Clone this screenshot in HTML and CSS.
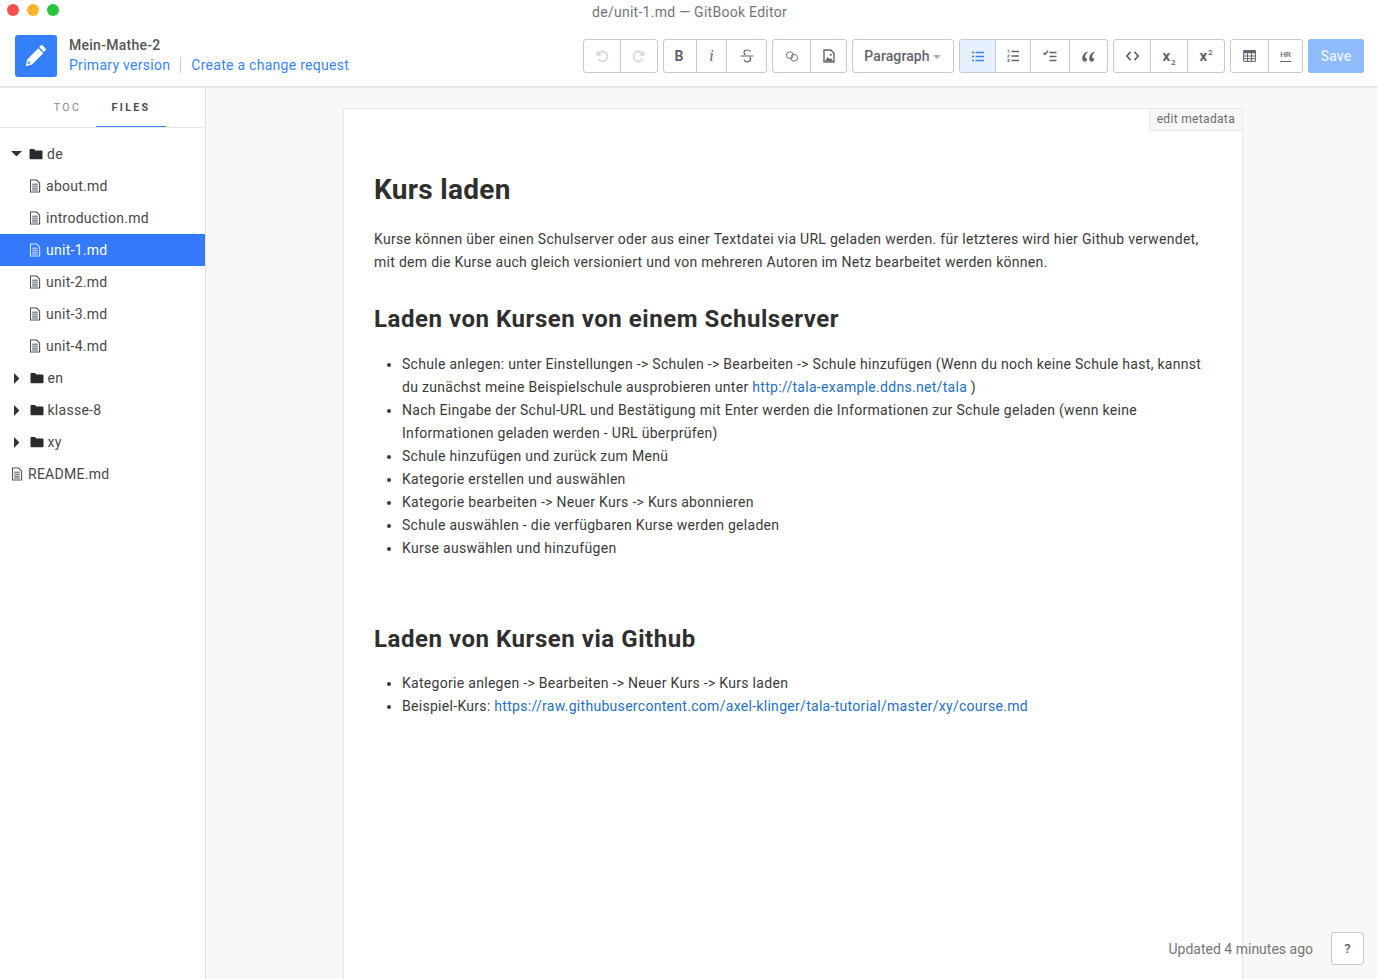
FILE: index.html
```html
<!DOCTYPE html>
<html lang="de">
<head>
<meta charset="utf-8">
<title>de/unit-1.md — GitBook Editor</title>
<link rel="stylesheet" href="styles.css">
</head>
<body>
<svg class="defs" width="0" height="0" aria-hidden="true">
  <symbol id="file" viewBox="0 0 12 14"><path d="M1.500 1h6.200L10.600 3.900V13H1.500z" fill="none" stroke="currentColor" stroke-width="1.100"/><path d="M3.200 5.200h5.600M3.200 7.200h5.600M3.200 9.200h5.600M3.200 11h5.600" stroke="currentColor" stroke-width="1"/></symbol>
  <symbol id="folder" viewBox="0 0 14 12"><path d="M0.500 2.200C0.500 1.500 1 1 1.700 1H5l1.200 1.400h6.200c.6 0 1.100.5 1.100 1.100v6.700c0 .6-.5 1.100-1.100 1.100H1.700c-.7 0-1.200-.5-1.200-1.100z" fill="currentColor"/></symbol>
</svg>
<div class="app">
  <header class="header">
    <div class="titlebar">
      <div class="lights"><i class="light red"></i><i class="light yellow"></i><i class="light green"></i></div>
      <div class="wintitle">de/unit-1.md — GitBook Editor</div>
    </div>
    <div class="headbar">
      <div class="logo">
        <svg width="24" height="24" viewBox="0 0 24 24"><path d="M15.100 3.100l1.900-1.700c.5-.4 1.100-.4 1.600 0l3 3c.5.5.5 1.200 0 1.700l-1.800 1.800z" fill="#fff"/><path d="M14.300 4.200l5 5L8 20.600l-6.300 1.700 1.500-6.900zM4.300 17l-.7 3 3-.8z" fill="#fff" fill-rule="evenodd"/></svg>
      </div>
      <div class="book">
        <div class="bookname">Mein-Mathe-2</div>
        <div class="booklinks"><a class="primary">Primary version</a><a class="change">Create a change request</a></div>
      </div>
      <div class="toolbar">
        <div class="group">
          <button class="tb w37 off"><svg width="14" height="14" viewBox="0 0 14 14"><path d="M2.500 2v3.800h3.800M2.800 5.600A5 5 0 1 1 3.200 10" fill="none" stroke="currentColor" stroke-width="2"/></svg></button>
          <button class="tb w36 off"><svg width="14" height="14" viewBox="0 0 14 14"><path d="M11.500 2v3.800H7.700M11.200 5.600A5 5 0 1 0 10.800 10" fill="none" stroke="currentColor" stroke-width="2"/></svg></button>
        </div>
        <div class="group">
          <button class="tb w33 glyph b">B</button>
          <button class="tb w30 glyph i">i</button>
          <button class="tb w39"><svg width="16" height="16" viewBox="0 0 16 16"><path d="M11.500 3.400C11 2.500 10 2 8.300 2 6 2 5 3.200 5 4.500c0 1 .5 1.900 1.500 2.500M5 11.600c.5 1.300 1.700 2.200 3.400 2.200 2 0 3.300-1 3.300-2.700 0-1-.4-1.800-1.200-2.400" fill="none" stroke="currentColor" stroke-width="1.200"/><path d="M1.500 8h13" stroke="currentColor" stroke-width="1.100"/></svg></button>
        </div>
        <div class="group">
          <button class="tb w38"><svg width="14" height="11" viewBox="0 0 14 11"><circle cx="4.800" cy="4.200" r="3.400" fill="none" stroke="currentColor" stroke-width=".9"/><circle cx="9.200" cy="6.800" r="3.400" fill="none" stroke="currentColor" stroke-width=".9"/></svg></button>
          <button class="tb w35"><svg width="12" height="14" viewBox="0 0 12 14"><path d="M1 1h6.800L11 4.200V13H1z" fill="none" stroke="currentColor" stroke-width="1.400"/><path d="M2 12l2.800-4 1.800 2.300 1.100-1.200L10 12z" fill="currentColor"/><circle cx="7.800" cy="5.800" r="1.100" fill="currentColor"/></svg></button>
        </div>
        <div class="group">
          <button class="tb para">Paragraph<i class="caret"></i></button>
        </div>
        <div class="group">
          <button class="tb w36 on"><svg width="12" height="11" viewBox="0 0 12 11"><path d="M3.500 1.500H12M3.500 5.500H12M3.500 9.500H12" stroke="currentColor" stroke-width="1.500"/><path d="M0 1.500h2M0 5.500h2M0 9.500h2" stroke="currentColor" stroke-width="1.500"/></svg></button>
          <button class="tb w35"><svg width="12" height="12" viewBox="0 0 12 12"><path d="M4.500 1.500H12M4.500 6H12M4.500 10.500H12" stroke="currentColor" stroke-width="1.500"/><path d="M0.500.5h1.500v2.200M0.500 5h2L.5 7h2M.5 9.500h2l-.8 1 .8 1H.5" fill="none" stroke="currentColor" stroke-width=".8"/></svg></button>
          <button class="tb w39"><svg width="14" height="12" viewBox="0 0 14 12"><path d="M0.300 2.800l1.700 1.700L5 .8" fill="none" stroke="currentColor" stroke-width="1.500"/><path d="M6.500 2.500h7M6.500 6.500h7M6.500 10.500h7" stroke="currentColor" stroke-width="1.500"/></svg></button>
          <button class="tb w37"><svg width="13" height="11" viewBox="0 0 13 11"><path d="M5.600.4C2.400 1.600.2 3.900.2 7.200c0 2.300 1.100 3.500 2.600 3.500 1.300 0 2.200-.9 2.200-2.100S4.200 6.500 3 6.400c.1-2 1-3.700 2.900-5.100zM12.600.4C9.400 1.600 7.200 3.900 7.200 7.200c0 2.300 1.100 3.500 2.600 3.500 1.300 0 2.200-.9 2.200-2.100s-.8-2.100-2-2.200c.1-2 1-3.700 2.900-5.100z" fill="currentColor"/></svg></button>
        </div>
        <div class="group">
          <button class="tb w37"><svg width="13" height="10" viewBox="0 0 13 10"><path d="M4.500.8L1 5l3.500 4.200M8.500.8L12 5 8.500 9.200" fill="none" stroke="currentColor" stroke-width="1.700"/></svg></button>
          <button class="tb w37 glyph script"><span>x<sub>2</sub></span></button>
          <button class="tb w36 glyph script"><span>x<sup>2</sup></span></button>
        </div>
        <div class="group">
          <button class="tb w38"><svg width="13" height="12" viewBox="0 0 13 12"><path d="M.6.600h11.800v10.800H.6zM.6 6h11.800M.6 8.700h11.800M4.500 3.300v7.800M8.500 3.300v7.800" fill="none" stroke="currentColor" stroke-width="1"/><path d="M.6.600h11.800v2.700H.6z" fill="currentColor"/></svg></button>
          <button class="tb w33 hr"><span class="hrtext">HR</span></button>
        </div>
        <button class="save">Save</button>
      </div>
    </div>
  </header>
  <div class="main">
    <aside class="sidebar">
      <nav class="tabs"><span class="tab">TOC</span><span class="tab active">FILES</span></nav>
      <ul class="tree">
        <li class="row folder"><i class="arrow down"></i><svg class="ficon"><use href="#folder"/></svg>de</li>
        <li class="row file nested"><svg class="dicon"><use href="#file"/></svg>about.md</li>
        <li class="row file nested"><svg class="dicon"><use href="#file"/></svg>introduction.md</li>
        <li class="row file nested selected"><svg class="dicon"><use href="#file"/></svg>unit-1.md</li>
        <li class="row file nested"><svg class="dicon"><use href="#file"/></svg>unit-2.md</li>
        <li class="row file nested"><svg class="dicon"><use href="#file"/></svg>unit-3.md</li>
        <li class="row file nested"><svg class="dicon"><use href="#file"/></svg>unit-4.md</li>
        <li class="row folder"><i class="arrow right"></i><svg class="ficon"><use href="#folder"/></svg>en</li>
        <li class="row folder"><i class="arrow right"></i><svg class="ficon"><use href="#folder"/></svg>klasse-8</li>
        <li class="row folder"><i class="arrow right"></i><svg class="ficon"><use href="#folder"/></svg>xy</li>
        <li class="row file"><svg class="dicon"><use href="#file"/></svg>README.md</li>
      </ul>
    </aside>
    <main class="stage">
      <article class="page">
        <a class="metadata">edit metadata</a>
        <h1>Kurs laden</h1>
        <p>Kurse können über einen Schulserver oder aus einer Textdatei via URL geladen werden. für letzteres wird hier Github verwendet, mit dem die Kurse auch gleich versioniert und von mehreren Autoren im Netz bearbeitet werden können.</p>
        <h2>Laden von Kursen von einem Schulserver</h2>
        <ul class="list">
          <li>Schule anlegen: unter Einstellungen -&gt; Schulen -&gt; Bearbeiten -&gt; Schule hinzufügen (Wenn du noch keine Schule hast, kannst du zunächst meine Beispielschule ausprobieren unter <a>http://tala-example.ddns.net/tala</a> )</li>
          <li>Nach Eingabe der Schul-URL und Bestätigung mit Enter werden die Informationen zur Schule geladen (wenn keine Informationen geladen werden - URL überprüfen)</li>
          <li>Schule hinzufügen und zurück zum Menü</li>
          <li>Kategorie erstellen und auswählen</li>
          <li>Kategorie bearbeiten -&gt; Neuer Kurs -&gt; Kurs abonnieren</li>
          <li>Schule auswählen - die verfügbaren Kurse werden geladen</li>
          <li>Kurse auswählen und hinzufügen</li>
        </ul>
        <h2 class="second">Laden von Kursen via Github</h2>
        <ul class="list">
          <li>Kategorie anlegen -&gt; Bearbeiten -&gt; Neuer Kurs -&gt; Kurs laden</li>
          <li>Beispiel-Kurs: <a>https://raw.githubusercontent.com/axel-klinger/tala-tutorial/master/xy/course.md</a></li>
        </ul>
      </article>
    </main>
  </div>
  <div class="status"><span>Updated 4 minutes ago</span><button class="help">?</button></div>
</div>
</body>
</html>
```
FILE: styles.css
```css
* { box-sizing: border-box; }
html, body { margin: 0; height: 100%; overflow: hidden; }
body { font-family: Roboto, "Liberation Sans", sans-serif; font-size: 14px; color: #333; background: #fff; }
.defs { position: absolute; }
.app { height: 979px; display: flex; flex-direction: column; }
.header { height: 88px; flex: none; border-bottom: 2px solid #e7e7e7; display: flex; flex-direction: column; background: #fff; }
.titlebar { height: 24px; flex: none; position: relative; display: flex; justify-content: center; align-items: center; }
.lights { position: absolute; left: 7px; top: 4px; display: flex; gap: 8px; }
.light { width: 12px; height: 12px; border-radius: 50%; display: block; }
.red { background: #fb4f4b; }
.yellow { background: #fdb42d; }
.green { background: #2ac13f; }
.wintitle { font-size: 14px; color: #757575; letter-spacing: .27px; margin-left: 2px; }
.headbar { flex: 1; display: flex; align-items: flex-start; padding: 11px 13px 0 15px; }
.logo { width: 42px; height: 42px; background: #3480fb; border-radius: 3px; display: flex; align-items: center; justify-content: center; flex: none; }
.book { margin-left: 12px; }
.bookname { font-size: 14px; font-weight: 500; color: #555; line-height: 20px; letter-spacing: .27px; }
.booklinks { display: flex; align-items: center; line-height: 20px; font-size: 14px; letter-spacing: .28px; color: #3884ff; }
.primary { padding-right: 10px; border-right: 1px solid #c5c9d0; line-height: 16px; }
.change { padding-left: 10px; }
.toolbar { margin-left: auto; display: flex; gap: 5px; margin-top: 4px; }
.group { display: flex; border: 1px solid #c8c8d4; border-radius: 3px; height: 34px; background: #fff; overflow: hidden; }
.tb { border: 0; border-right: 1px solid #c8c8d4; background: transparent; padding: 0; margin: 0; height: 32px; display: flex; align-items: center; justify-content: center; color: #5f646e; font-family: inherit; }
.tb:last-child { border-right: 0; }
.w30 { width: 30px; } .w33 { width: 33px; } .w35 { width: 35px; } .w36 { width: 36px; } .w37 { width: 37px; } .w38 { width: 38px; } .w39 { width: 39px; }
.off { color: #dcdce0; }
.on { background: #e6f0fe; color: #3884ff; }
.glyph { font-size: 14px; }
.b { font-weight: 700; padding-right: 2px; }
.i { font-style: italic; font-weight: 500; font-family: "Liberation Serif", serif; font-size: 16px; }
.script { font-weight: 700; font-size: 15px; }
.script sub, .script sup { font-size: 8px; line-height: 0; font-weight: 500; margin-left: 1px; }
.para { width: 100px; font-size: 14px; font-weight: 500; color: #5f646e; letter-spacing: .1px; padding-right: 1px; }
.caret { display: block; margin-left: 3px; margin-top: 2px; border: 4px solid transparent; border-top-color: #a8acb3; border-bottom: 0; }
.hrtext { font-size: 8px; font-weight: 500; border-bottom: 1px solid currentColor; line-height: 10px; padding-bottom: 1px; }
.save { width: 56px; height: 34px; border: 0; border-radius: 3px; background: #8fbbff; color: #e8f1ff; font: 500 14px Roboto, sans-serif; letter-spacing: .2px; }
.main { flex: 1; display: flex; min-height: 0; }
.sidebar { width: 206px; flex: none; border-right: 1px solid #e0e0e0; background: #fff; }
.tabs { height: 40px; border-bottom: 1px solid #e7e7e7; display: flex; padding-left: 39px; font-size: 10.500px; letter-spacing: 2.400px; }
.tab { width: 57px; height: 39px; text-align: center; line-height: 39px; color: #85858d; }
.tab.active { width: 70px; font-weight: 700; color: #4a4a50; border-bottom: 1px solid #3884ff; }
.tree { list-style: none; margin: 10px 0 0; padding: 0; }
.row { height: 32px; display: flex; align-items: center; font-size: 14px; color: #484848; padding-left: 11px; letter-spacing: .27px; }
.nested { padding-left: 29px; }
.selected { background: #3479fb; color: #fff; }
.dicon { width: 12px; height: 14px; margin-right: 5px; flex: none; color: #555; }
.selected .dicon { color: #d5e4ff; }
.ficon { width: 14px; height: 12px; margin: 0 4px 0 8px; flex: none; color: #2b2b2b; }
.arrow { width: 10px; flex: none; height: 0; display: block; }
.arrow.down { border-style: solid; border-color: #333 transparent transparent; height: 5.500px; width: 11px; border-width: 5.500px 5.500px 0; margin-right: -1px; }
.arrow.right { border-style: solid; border-color: transparent transparent transparent #333; border-width: 5.500px 0 5.500px 5.500px; width: 5.500px; height: 11px; margin: 0 2px 0 3px; }
.stage { flex: 1; background: #f8f8f8; padding: 20px 0 0 137px; overflow: hidden; }
.page { width: 900px; height: 900px; background: #fff; border: 1px solid #e7e7ec; position: relative; padding: 60px 30px 0; color: #3a3a3a; letter-spacing: .295px; line-height: 23px; }
.metadata { position: absolute; right: -1px; top: -1px; height: 23px; padding: 0 7px; font-size: 12px; line-height: 21px; color: #6c6c6c; background: #f7f7f7; border: 1px solid #e7e7ec; letter-spacing: .33px; }
h1 { font-size: 28px; font-weight: 700; margin: 0 0 17px; line-height: 42px; color: #2f2f2f; letter-spacing: .3px; }
h2 { font-size: 24px; font-weight: 700; margin: 27px 0 16px; line-height: 36px; color: #2f2f2f; letter-spacing: .54px; }
h2.second { margin: 61px 0 15px; }
p { margin: 0; }
.list { margin: 0; padding-left: 28px; }
.list a { color: #2670c4; }
.status { position: absolute; right: 13px; bottom: 14px; display: flex; align-items: center; gap: 18px; color: #767676; font-size: 14px; }
.help { width: 33px; height: 33px; border: 1px solid #c8c8d4; border-radius: 3px; background: #fff; color: #5a5f69; font: 500 13px Roboto, sans-serif; }
```
